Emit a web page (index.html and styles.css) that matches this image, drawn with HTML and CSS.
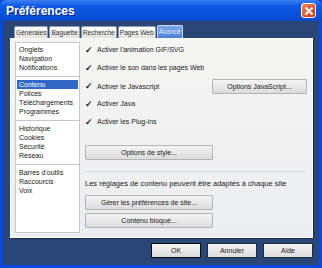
FILE: index.html
```html
<!DOCTYPE html>
<html lang="fr">
<head>
  <meta charset="UTF-8" />
  <title>Préférences</title>
  <link rel="stylesheet" href="styles.css">
</head>
<body>
  <div class="window">
    <div class="titlebar">
      <span class="title">Préférences</span>
      <span class="close">
        <svg width="10" height="10" viewBox="0 0 10 10"><path d="M1.5 1.5 L8.5 8.5 M8.5 1.5 L1.5 8.5" stroke="#fff" stroke-width="2"/></svg>
      </span>
    </div>

    <div class="body">
      <div class="tabs">
        <div class="tab">Générales</div>
        <div class="tab">Baguette</div>
        <div class="tab">Recherche</div>
        <div class="tab">Pages Web</div>
        <div class="tab active">Avancé</div>
      </div>

      <div class="panel">
        <div class="sidebar">
          <div class="group first">
            <div class="item">Onglets</div>
            <div class="item">Navigation</div>
            <div class="item">Notifications</div>
          </div>
          <div class="group">
            <div class="item selected">Contenu</div>
            <div class="item">Polices</div>
            <div class="item">Téléchargements</div>
            <div class="item">Programmes</div>
          </div>
          <div class="group">
            <div class="item">Historique</div>
            <div class="item">Cookies</div>
            <div class="item">Sécurité</div>
            <div class="item">Réseau</div>
          </div>
          <div class="group last">
            <div class="item">Barres d'outils</div>
            <div class="item">Raccourcis</div>
            <div class="item">Voix</div>
          </div>
        </div>

        <div class="main">
          <div class="option"><span class="check">&#10003;</span>Activer l'animation GIF/SVG</div>
          <div class="option"><span class="check">&#10003;</span>Activer le son dans les pages Web</div>
          <div class="option row">
            <span><span class="check">&#10003;</span>Activer le Javascript</span>
            <button class="btn js">Options JavaScript...</button>
          </div>
          <div class="option"><span class="check">&#10003;</span>Activer Java</div>
          <div class="option"><span class="check">&#10003;</span>Activer les Plug-ins</div>

          <button class="btn wide style-btn">Options de style...</button>

          <div class="sep"></div>

          <div class="note">Les réglages de contenu peuvent être adaptés à chaque site</div>
          <button class="btn wide">Gérer les préférences de site...</button>
          <button class="btn wide">Contenu bloqué...</button>
        </div>
      </div>

      <div class="footer">
        <button class="btn foot ok">OK</button>
        <button class="btn foot">Annuler</button>
        <button class="btn foot">Aide</button>
      </div>
    </div>
  </div>
</body>
</html>
```

FILE: styles.css
```css
body {
  margin: 0;
  padding: 0;
  font-family: "Liberation Sans", Tahoma, sans-serif;
  font-size: 8px;
  color: #1a1a1a;
}

.window {
  width: 322px;
  height: 268px;
  box-sizing: border-box;
  border-left: 3px solid #0a48e0;
  border-right: 3px solid #0a48e0;
  border-bottom: 3px solid #0a48e0;
  background-color: #2a4676;
  display: flex;
  flex-direction: column;
}

.titlebar {
  height: 21px;
  margin: 0 -3px;
  padding: 0 6px;
  background: linear-gradient(#3d7ff2, #0c58e4 30%, #0a50d8 80%, #0846c4);
  display: flex;
  align-items: center;
  justify-content: space-between;
  border-radius: 6px 6px 0 0;
}

.title {
  color: #fff;
  font-family: "Liberation Sans", Arial, sans-serif;
  font-size: 12px;
  font-weight: bold;
  text-shadow: 1px 1px 0 #0a2a80;
}

.close {
  width: 15px;
  height: 15px;
  box-sizing: border-box;
  border: 1px solid #fff;
  border-radius: 3px;
  background: linear-gradient(135deg, #f08a5c, #e0502a 60%, #c83a18);
  display: flex;
  align-items: center;
  justify-content: center;
}

.body {
  flex: 1;
  padding: 5px 6px 0 7px;
  display: flex;
  flex-direction: column;
}

.tabs {
  display: flex;
  gap: 1px;
  padding-left: 4px;
  height: 12px;
  align-items: flex-end;
}

.tab {
  height: 11px;
  padding: 0 1px;
  background: linear-gradient(#ffffff, #e2e2dc);
  border: 1px solid #8c9cb4;
  border-bottom: none;
  border-radius: 2px 2px 0 0;
  font-size: 6.6px;
  line-height: 11px;
  color: #333;
}

.tab.active {
  height: 12px;
  background: linear-gradient(#7aa8e8, #4a80d4);
  color: #dfe9ff;
  border-color: #c8d8f0;
}

.panel {
  height: 200px;
  width: 303px;
  box-sizing: border-box;
  background: linear-gradient(#f5f5f3, #ecedf0);
  border: 1px solid #fff;
  box-shadow: 1px 1px 0 #1a2c4c;
  display: flex;
  padding: 3px 5px 4px 4px;
}

.sidebar {
  width: 63px;
  background-color: #fff;
  border: 1px solid #c6c8cc;
  display: flex;
  flex-direction: column;
}

.group {
  padding: 3px 1px 4px 1px;
  border-bottom: 1px solid #c6c8cc;
}

.group.first {
  padding-top: 2px;
}

.group.last {
  border-bottom: none;
  flex: 1;
}

.item {
  height: 9px;
  line-height: 9px;
  padding-left: 2px;
  font-size: 7px;
  white-space: nowrap;
}

.item.selected {
  background-color: #3168c8;
  color: #fff;
}

.main {
  flex: 1;
  padding: 1px 0 0 5px;
  display: flex;
  flex-direction: column;
}

.option {
  height: 18px;
  line-height: 14px;
  font-size: 7px;
  display: flex;
  align-items: flex-start;
}

.option.row {
  justify-content: space-between;
}

.check {
  display: inline-block;
  width: 12px;
  font-size: 9px;
  font-weight: bold;
  color: #222;
}

.btn {
  font-family: "Liberation Sans", Tahoma, sans-serif;
  font-size: 7px;
  color: #222;
  background: linear-gradient(#f4f4f4, #dcdcdc);
  border: 1px solid #b4b4b4;
  border-radius: 1px;
  height: 15px;
  padding: 0;
}

.btn.js {
  width: 95px;
}

.btn.wide {
  width: 128px;
  margin-bottom: 3px;
}

.style-btn {
  margin-top: 12px;
}

.sep {
  height: 1px;
  background-color: #d4d6da;
  margin: 8px 2px 5px 0;
}

.note {
  font-size: 7.5px;
  height: 13px;
  line-height: 13px;
  margin-bottom: 5px;
}

.footer {
  display: flex;
  justify-content: flex-end;
  gap: 6px;
  padding: 5px 0 0 0;
}

.btn.foot {
  flex: 0 0 50px;
  width: 50px;
  height: 15px;
  border: 1px solid #1a2a44;
}

.btn.ok {
  border: 1px solid #0a0a0a;
}
```
